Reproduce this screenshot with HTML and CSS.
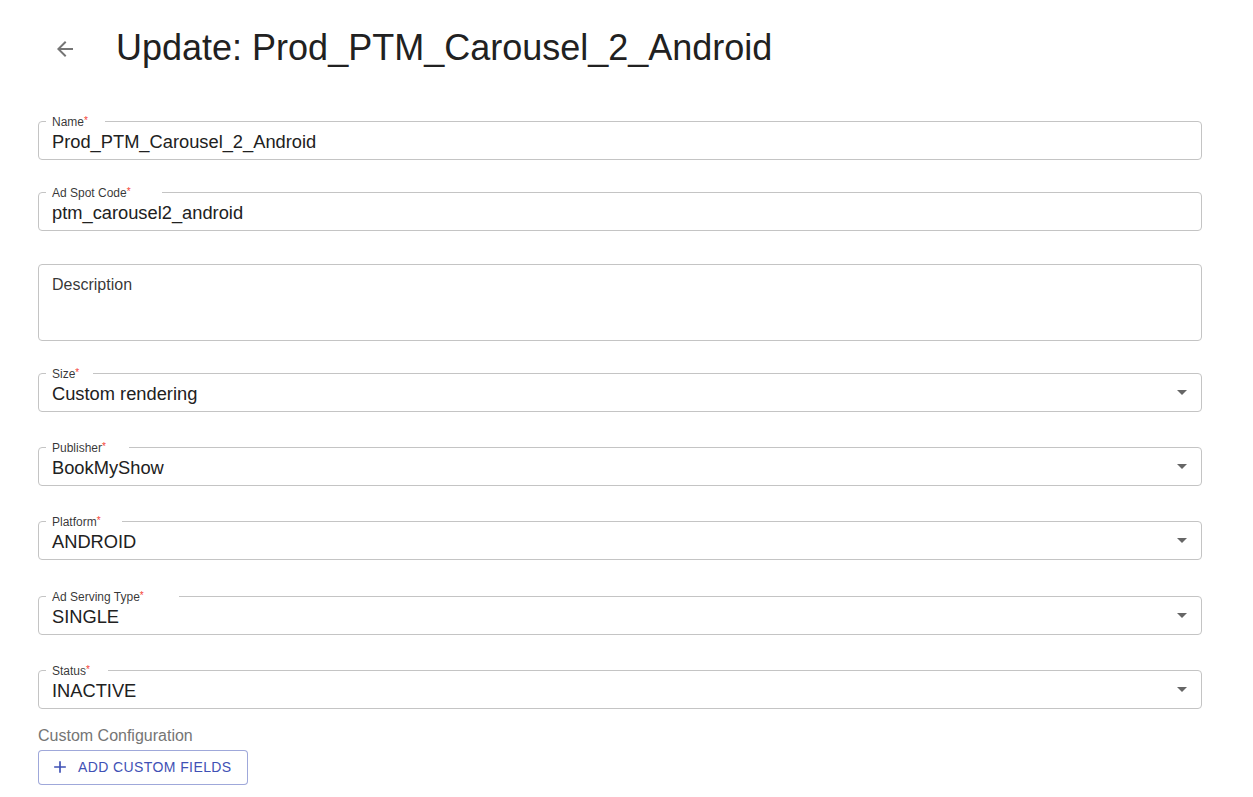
FILE: index.html
```html
<!DOCTYPE html>
<html lang="en">
<head>
<meta charset="utf-8">
<title>Update: Prod_PTM_Carousel_2_Android</title>
<link rel="stylesheet" href="styles.css">
</head>
<body>
<div class="page">
  <header class="header">
    <button class="back" type="button" aria-label="Back">
      <svg viewBox="0 0 24 24" width="24" height="24"><path d="M20 11H7.83l5.59-5.59L12 4l-8 8 8 8 1.41-1.41L7.83 13H20v-2z" fill="currentColor"/></svg>
    </button>
    <h1 class="title">Update: Prod_PTM_Carousel_2_Android</h1>
  </header>

  <form class="form">
    <fieldset class="field">
      <legend class="notch"><span>Name<i>*</i></span></legend>
      <label class="label">Name<span class="req">*</span></label>
      <div class="value">Prod_PTM_Carousel_2_Android</div>
    </fieldset>

    <fieldset class="field">
      <legend class="notch"><span>Ad Spot Code<i>*</i></span></legend>
      <label class="label">Ad Spot Code<span class="req">*</span></label>
      <div class="value">ptm_carousel2_android</div>
    </fieldset>

    <fieldset class="field field-area">
      <div class="placeholder">Description</div>
    </fieldset>

    <fieldset class="field field-select">
      <legend class="notch"><span>Size<i>*</i></span></legend>
      <label class="label">Size<span class="req">*</span></label>
      <div class="value">Custom rendering</div>
      <span class="caret"></span>
    </fieldset>

    <fieldset class="field field-select">
      <legend class="notch"><span>Publisher<i>*</i></span></legend>
      <label class="label">Publisher<span class="req">*</span></label>
      <div class="value">BookMyShow</div>
      <span class="caret"></span>
    </fieldset>

    <fieldset class="field field-select">
      <legend class="notch"><span>Platform<i>*</i></span></legend>
      <label class="label">Platform<span class="req">*</span></label>
      <div class="value">ANDROID</div>
      <span class="caret"></span>
    </fieldset>

    <fieldset class="field field-select">
      <legend class="notch"><span>Ad Serving Type<i>*</i></span></legend>
      <label class="label">Ad Serving Type<span class="req">*</span></label>
      <div class="value">SINGLE</div>
      <span class="caret"></span>
    </fieldset>

    <fieldset class="field field-select">
      <legend class="notch"><span>Status<i>*</i></span></legend>
      <label class="label">Status<span class="req">*</span></label>
      <div class="value">INACTIVE</div>
      <span class="caret"></span>
    </fieldset>

    <div class="custom">
      <div class="custom-title">Custom Configuration</div>
      <button class="outlined-btn" type="button">
        <svg viewBox="0 0 24 24" width="20" height="20"><path d="M19 13h-6v6h-2v-6H5v-2h6V5h2v6h6v2z" fill="currentColor"/></svg>
        <span>ADD CUSTOM FIELDS</span>
      </button>
    </div>
  </form>
</div>
</body>
</html>
```

FILE: styles.css
```css
html, body {
  margin: 0;
  padding: 0;
  background: #ffffff;
}

body {
  font-family: "Liberation Sans", Arial, Helvetica, sans-serif;
  color: rgba(0, 0, 0, 0.87);
}

.page {
  padding: 0 51px 0 38px;
}

.header {
  display: flex;
  align-items: center;
  padding-top: 28px;
  height: 40px;
}

.back {
  display: flex;
  align-items: center;
  justify-content: center;
  width: 24px;
  height: 24px;
  padding: 0;
  margin: 1px 0 0 15px;
  border: none;
  background: none;
  color: #757575;
  cursor: pointer;
}

.title {
  margin: 0 0 0 39px;
  font-size: 36px;
  font-weight: 400;
  line-height: 40px;
  color: #212121;
  letter-spacing: 0;
}

.form {
  display: flex;
  flex-direction: column;
  gap: 32px;
  margin-top: 53px;
}

.field {
  position: relative;
  box-sizing: border-box;
  height: 39px;
  margin: 0;
  padding: 0 13px;
  min-width: 0;
  border: 1px solid #c4c4c4;
  border-radius: 4px;
}

.field-area {
  height: 77px;
  margin-top: 1px;
}

.field-select + .field-select {
  margin-top: 3.2px;
}

.notch {
  padding: 0 5px;
  margin: 0 0 0 -6px;
  line-height: 0;
  height: 0;
  font-size: 16px;
}

.notch span {
  visibility: hidden;
  font-size: 16px;
  line-height: 0;
  white-space: nowrap;
}

.notch i {
  font-style: normal;
}

.label {
  position: absolute;
  left: 13px;
  top: -7px;
  font-size: 12px;
  line-height: 14px;
  color: rgba(0, 0, 0, 0.8);
  white-space: nowrap;
}

.req {
  color: #f44336;
  font-size: 10px;
  vertical-align: top;
  position: relative;
  top: -1px;
}

.value {
  font-size: 18.3px;
  line-height: 37px;
  height: 37px;
  padding-top: 1px;
  box-sizing: border-box;
  color: #212121;
  white-space: nowrap;
}

.placeholder {
  padding-top: 11px;
  font-size: 16px;
  line-height: 18px;
  color: rgba(0, 0, 0, 0.8);
}

.caret {
  position: absolute;
  right: 14px;
  top: 16px;
  width: 0;
  height: 0;
  border-left: 5px solid transparent;
  border-right: 5px solid transparent;
  border-top: 5px solid #666666;
}

.custom {
  display: flex;
  flex-direction: column;
  align-items: flex-start;
  margin-top: -15px;
}

.custom-title {
  font-size: 16px;
  line-height: 20px;
  color: #757575;
}

.outlined-btn {
  display: flex;
  align-items: center;
  gap: 8px;
  margin-top: 4px;
  box-sizing: border-box;
  height: 35px;
  padding: 0 15px 0 11px;
  border: 1px solid rgba(63, 81, 181, 0.5);
  border-radius: 4px;
  background: #ffffff;
  color: #3f51b5;
  font-family: "Liberation Sans", Arial, Helvetica, sans-serif;
  font-size: 14px;
  letter-spacing: 0.4px;
  cursor: pointer;
}

.outlined-btn svg {
  display: block;
}
```
